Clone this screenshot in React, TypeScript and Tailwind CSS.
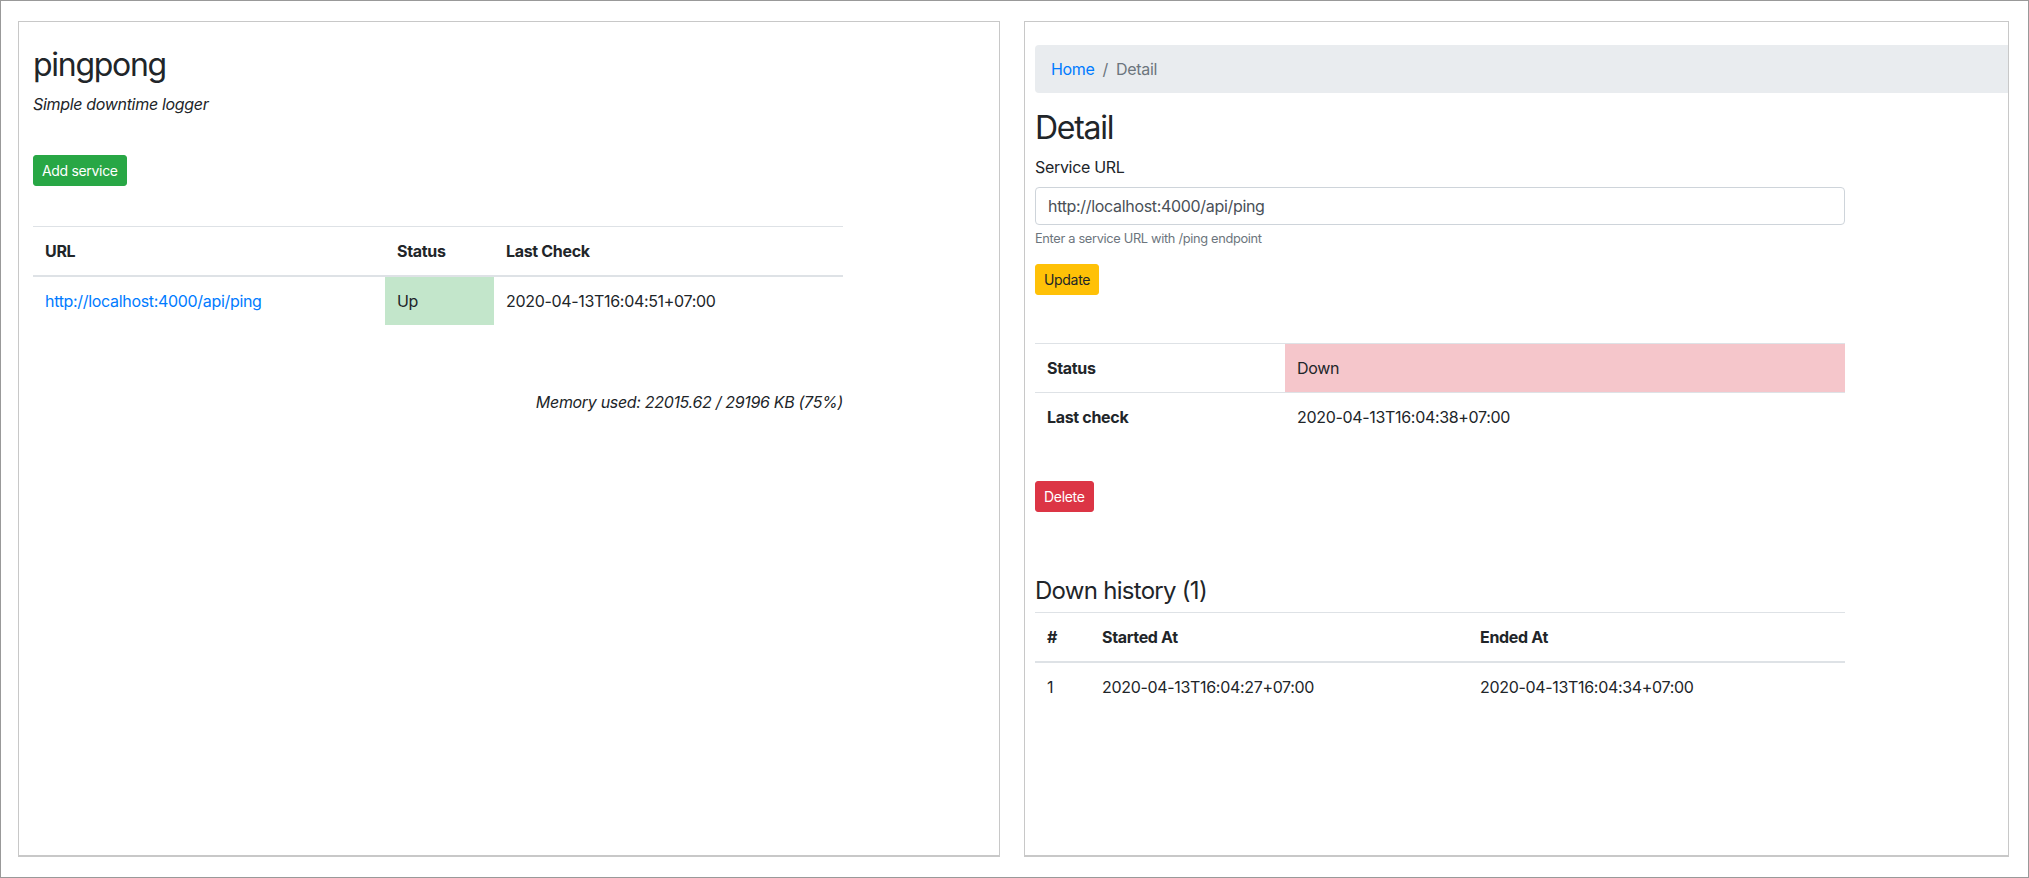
import React from "react";

// rows of the service list on the home screen
const services = [
  { url: "http://localhost:4000/api/ping", status: "Up", lastCheck: "2020-04-13T16:04:51+07:00" },
];

// down history of the service on the detail screen
const history = [
  { id: 1, startedAt: "2020-04-13T16:04:27+07:00", endedAt: "2020-04-13T16:04:34+07:00" },
];

function HomePanel() {
  return (
    <div className="w-[982px] h-[836px] shrink-0 border border-[#c8c8c8] border-b-2 bg-white pl-[14px] pt-[24px]">
      <h1 className="text-[32px] leading-[1.2] font-normal tracking-[-0.04em] text-[#212529] mb-2">pingpong</h1>
      <p className="italic leading-6 text-[#212529]">Simple downtime logger</p>

      <button className="mt-[39px] block bg-[#28a745] border border-[#28a745] text-white text-[14px] leading-[21px] px-2 py-1 rounded-[3px]">
        Add service
      </button>

      <table className="mt-10 w-[810px] border-collapse text-left text-[#212529]">
        <thead>
          <tr className="border-t border-[#dee2e6]">
            <th className="w-[352px] px-3 py-3 leading-6 font-bold border-b-2 border-[#dee2e6]">URL</th>
            <th className="w-[109px] px-3 py-3 leading-6 font-bold border-b-2 border-[#dee2e6]">Status</th>
            <th className="px-3 py-3 leading-6 font-bold border-b-2 border-[#dee2e6]">Last Check</th>
          </tr>
        </thead>
        <tbody>
          {services.map((s) => (
            <tr key={s.url}>
              <td className="px-3 py-3 leading-6">
                <a href="#" className="text-[#007bff]">{s.url}</a>
              </td>
              <td className="px-3 py-3 leading-6 bg-[#c3e6cb]">{s.status}</td>
              <td className="px-3 py-3 leading-6">{s.lastCheck}</td>
            </tr>
          ))}
        </tbody>
      </table>

      <p className="mt-[65px] w-[810px] text-right italic leading-6 text-[#212529]">
        Memory used: 22015.62 / 29196 KB (75%)
      </p>
    </div>
  );
}

function DetailPanel() {
  return (
    <div className="w-[985px] h-[836px] shrink-0 border border-[#c8c8c8] border-b-2 bg-white pl-[10px] pt-[23px] overflow-hidden">
      {/* breadcrumb runs out to the right edge of the cropped window */}
      <nav className="h-12 bg-[#e9ecef] rounded-l-[4px] px-4 py-3 leading-6 flex">
        <a href="#" className="text-[#007bff]">Home</a>
        <span className="px-2 text-[#6c757d]">/</span>
        <span className="text-[#6c757d]">Detail</span>
      </nav>

      <h1 className="mt-4 text-[32px] leading-[1.2] font-normal tracking-[-0.04em] text-[#212529] mb-2">Detail</h1>

      <label className="block leading-6 text-[#212529] mb-2">Service URL</label>
      <input
        defaultValue="http://localhost:4000/api/ping"
        className="block w-[810px] h-[38px] px-3 border border-[#ced4da] rounded-[4px] text-[#495057] leading-6 tracking-[-0.02em] outline-none"
      />
      <small className="block mt-1 text-[12.8px] leading-[19px] text-[#6c757d]">Enter a service URL with /ping endpoint</small>

      <button className="mt-4 block bg-[#ffc107] border border-[#ffc107] text-[#212529] text-[14px] leading-[21px] px-2 py-1 rounded-[3px]">
        Update
      </button>

      <table className="mt-12 w-[810px] border-collapse text-left text-[#212529]">
        <tbody>
          <tr className="border-t border-[#dee2e6]">
            <th className="w-[250px] px-3 py-3 leading-6 font-bold">Status</th>
            <td className="px-3 py-3 leading-6 bg-[#f5c6cb]">Down</td>
          </tr>
          <tr className="border-t border-[#dee2e6]">
            <th className="px-3 py-3 leading-6 font-bold">Last check</th>
            <td className="px-3 py-3 leading-6">2020-04-13T16:04:38+07:00</td>
          </tr>
        </tbody>
      </table>

      <button className="mt-10 block bg-[#dc3545] border border-[#dc3545] text-white text-[14px] leading-[21px] px-2 py-1 rounded-[3px]">
        Delete
      </button>

      <h4 className="mt-[64px] mb-[7px] text-[24px] leading-[29px] font-normal tracking-[-0.03em] text-[#212529]">
        Down history ({history.length})
      </h4>
      <table className="w-[810px] border-collapse text-left text-[#212529]">
        <thead>
          <tr className="border-t border-[#dee2e6]">
            <th className="w-[55px] px-3 py-3 leading-6 font-bold border-b-2 border-[#dee2e6]">#</th>
            <th className="w-[378px] px-3 py-3 leading-6 font-bold border-b-2 border-[#dee2e6]">Started At</th>
            <th className="px-3 py-3 leading-6 font-bold border-b-2 border-[#dee2e6]">Ended At</th>
          </tr>
        </thead>
        <tbody>
          {history.map((h) => (
            <tr key={h.id}>
              <td className="px-3 py-3 leading-6">{h.id}</td>
              <td className="px-3 py-3 leading-6">{h.startedAt}</td>
              <td className="px-3 py-3 leading-6">{h.endedAt}</td>
            </tr>
          ))}
        </tbody>
      </table>
    </div>
  );
}

export default function App() {
  return (
    <div className="w-[2029px] h-[878px] border border-[#999999] bg-white pl-[17px] pt-[20px] flex gap-[24px] font-['Inter','Liberation_Sans',sans-serif] text-[16px] tracking-[-0.02em]">
      <HomePanel />
      <DetailPanel />
    </div>
  );
}
